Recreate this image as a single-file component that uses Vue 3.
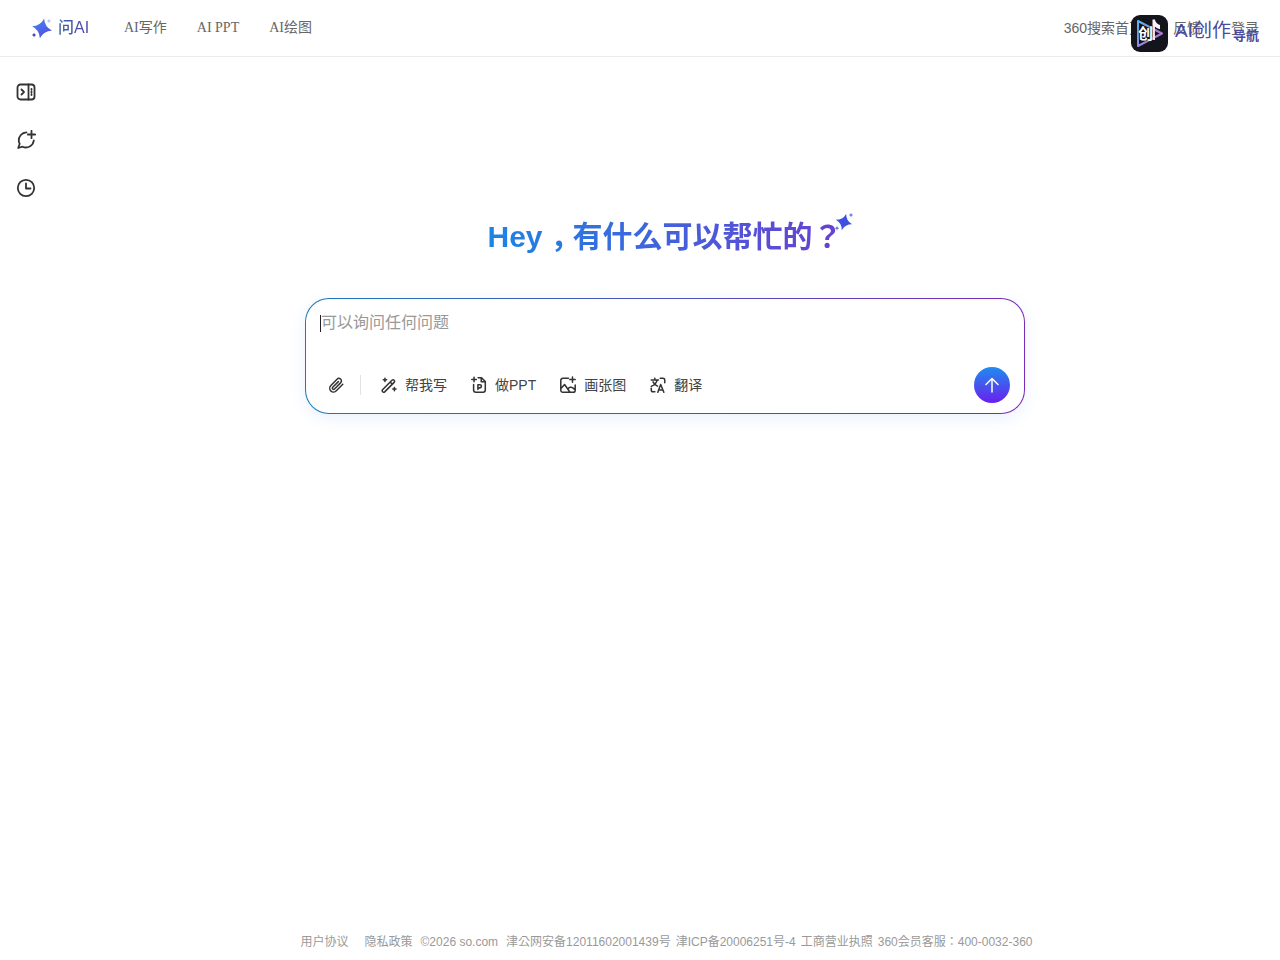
<script setup>
const navItems = ['AI写作', 'AI PPT', 'AI绘图']
const tools = [
  { key: 'write', label: '帮我写' },
  { key: 'ppt', label: '做PPT' },
  { key: 'image', label: '画张图' },
  { key: 'translate', label: '翻译' }
]
const footerLinks = ['©2026 so.com', '津公网安备12011602001439号', '津ICP备20006251号-4', '工商营业执照', '360会员客服：400-0032-360']
const star = 'M12 0Q14.500 9.500 24 12 14.500 14.500 12 24 9.500 14.500 0 12 9.500 9.500 12 0z'
</script>

<template>
  <div class="page">
    <header class="top">
      <div class="brand">
        <svg class="brand-star" viewBox="0 0 24 24">
          <defs>
            <linearGradient id="starFill" x1="0" y1="0" x2="1" y2="1">
              <stop offset="0" stop-color="#3f8ff0" />
              <stop offset="1" stop-color="#5a3fe0" />
            </linearGradient>
          </defs>
          <path :d="star" fill="url(#starFill)" transform="translate(13.100 12.500) rotate(12) scale(.92) translate(-12 -12)" />
          <path :d="star" fill="#a8cbf0" transform="translate(18.300 2) scale(.2)" />
          <path :d="star" fill="#3a3fa8" transform="translate(2 17.200) scale(.2)" />
        </svg>
        <span class="brand-name">问AI</span>
      </div>
      <nav class="nav">
        <a v-for="item in navItems" :key="item">{{ item }}</a>
      </nav>
      <div class="links">
        <a>360搜索首页</a>
        <a>反馈</a>
        <a>登录</a>
      </div>
      <div class="float-logo">
        <div class="float-icon">
          <svg viewBox="0 0 37 37">
            <defs>
              <linearGradient id="playEdge" x1="0" y1="0" x2="1" y2="1">
                <stop offset="0" stop-color="#4fb8ee" />
                <stop offset="1" stop-color="#d05fd0" />
              </linearGradient>
            </defs>
            <path d="M7 6 31 18.500 7 31z" fill="none" stroke="url(#playEdge)" stroke-width="2" stroke-linejoin="round" />
            <path d="M21.500 4.500h2.400c.6 3 2.400 4.500 5.100 5.600v4.200c-2-.5-3.700-1.400-5.100-2.800V25h-2.400z" fill="#fdf2f8" />
          </svg>
          <span class="float-mark">创</span>
        </div>
        <span class="float-title">AI创作</span>
        <span class="float-sub">导航</span>
      </div>
    </header>

    <div class="body">
      <aside class="side">
        <svg viewBox="0 0 20 20">
          <rect x="1.500" y="2.500" width="17" height="15" rx="3" />
          <path d="M12.500 2.500v15M5.500 7.500 8 10l-2.500 2.500M15.500 7v.8M15.500 9.600v.8M15.500 12.200v.8" />
        </svg>
        <svg viewBox="0 0 20 20">
          <path d="M10.500 2.300A8 8 0 0 0 2.800 11c.1 1.100.4 2 .9 2.800l-1.500 4.200 4.300-1.300a8 8 0 0 0 11.300-6.200" />
          <path d="M15.500 .8v7.400M11.800 4.500h7.400" />
        </svg>
        <svg viewBox="0 0 20 20">
          <circle cx="10" cy="10" r="8.200" />
          <path d="M10 5.500V10.500h4.500" />
        </svg>
      </aside>

      <main class="main">
        <div class="headline">
          <h1>Hey<span class="comma">，</span>有什么可以帮忙的？</h1>
          <svg class="headline-star" viewBox="0 0 24 24">
            <path :d="star" fill="#3f50e0" transform="translate(11.400 12.600) rotate(15) scale(.8) translate(-12 -12)" />
            <path :d="star" fill="#5a7fe0" transform="translate(17 2.200) scale(.2)" />
            <path :d="star" fill="#5a7fe0" transform="translate(1 17.200) scale(.2)" />
          </svg>
        </div>

        <section class="composer">
          <div class="input"><i class="caret"></i>可以询问任何问题</div>
          <div class="bar">
            <button class="attach">
              <svg viewBox="0 0 20 20">
                <path d="M16.800 9.200 10.300 15.800a3.700 3.700 0 0 1-5.600-5L11 4.300a2.500 2.500 0 0 1 3.800 3.300l-6.300 6.400a1.200 1.200 0 0 1-1.800-1.700l5.700-5.700" />
              </svg>
            </button>
            <span class="divider"></span>
            <button v-for="tool in tools" :key="tool.key" class="tool">
              <svg v-if="tool.key === 'write'" viewBox="0 0 20 20">
                <path d="M2.800 15.200 13.300 4.700a1.700 1.700 0 0 1 2.400 0 1.700 1.700 0 0 1 0 2.400L5.200 17.600a1.700 1.700 0 0 1-2.400-2.400zM11.300 6.700l2.400 2.400M5.500 2.500v3.500M3.700 4.200h3.600M16 12.800v3.500M14.200 14.500h3.600" />
              </svg>
              <svg v-else-if="tool.key === 'ppt'" viewBox="0 0 20 20">
                <path d="M9 2h3.800l4.200 4.200v9.300a2.500 2.500 0 0 1-2.500 2.500H6.500A2.500 2.500 0 0 1 4 15.500V9.500M12.500 2v4.500H17M8.800 15V9.800h2.200a1.700 1.700 0 0 1 0 3.400H8.800M4.500 1.500v5M2 4h5" />
              </svg>
              <svg v-else-if="tool.key === 'image'" viewBox="0 0 20 20">
                <path d="M10.500 2.500H4.300A2.300 2.300 0 0 0 2 4.800v11a2.300 2.300 0 0 0 2.300 2.300h11.400a2.300 2.300 0 0 0 2.300-2.300V10M2.200 14l4-4.500 6 8.500M10 14.500c1-2 3.500-2.500 5-1.500l3 2.500M15 1v6M12 4h6" />
              </svg>
              <svg v-else viewBox="0 0 20 20">
                <path d="M2.500 4.500h8M6.500 2.500v2M9 4.500c-.6 3-3 5.500-6.500 7M4.500 6.500c1 2.200 2.800 3.800 5 4.800M9.800 18l3.200-8.500 3.500 8.500M10.800 15.500h4.600M12.500 2.500h3a2 2 0 0 1 2 2v3M2.500 13.500v2a2 2 0 0 0 2 2h2" />
              </svg>
              <span>{{ tool.label }}</span>
            </button>
            <button class="send">
              <svg viewBox="0 0 20 20">
                <path d="M10 17V3.500M4 9.500l6-6 6 6" />
              </svg>
            </button>
          </div>
        </section>
      </main>
    </div>

    <footer class="foot">
      <a class="first">用户协议</a>
      <a class="second">隐私政策</a>
      <a v-for="text in footerLinks" :key="text">{{ text }}</a>
    </footer>
  </div>
</template>

<style scoped>
.page {
  height: 960px;
  display: flex;
  flex-direction: column;
  background: #fff;
  font-family: "Liberation Sans", "Noto Sans CJK KR", sans-serif;
}
.top {
  position: relative;
  height: 56px;
  flex: none;
  display: flex;
  align-items: center;
  padding-left: 30px;
  border-bottom: 1px solid #ebebeb;
}
.brand {
  display: flex;
  align-items: center;
  width: 94px;
}
.brand-star {
  width: 22px;
  height: 22px;
  margin-right: 6px;
}
.brand-name {
  font-size: 16px;
  line-height: 20px;
  font-weight: 500;
  background: linear-gradient(90deg, #3a66a8, #5240a8);
  -webkit-background-clip: text;
  background-clip: text;
  color: transparent;
}
.nav {
  display: flex;
  gap: 30px;
  font-family: "Liberation Serif", "Noto Sans CJK KR", serif;
  font-size: 14px;
  line-height: 20px;
  color: #666;
}
.links {
  margin-left: auto;
  display: flex;
  gap: 30px;
  padding-right: 21px;
  font-size: 14px;
  line-height: 20px;
  color: #666;
}
.float-logo {
  position: absolute;
  left: 1131px;
  top: 15px;
  width: 130px;
  height: 38px;
}
.float-icon {
  position: relative;
  width: 37px;
  height: 37px;
  border-radius: 9px;
  background: #14141c;
}
.float-icon svg {
  width: 37px;
  height: 37px;
  display: block;
}
.float-mark {
  position: absolute;
  left: 7px;
  top: 10px;
  font-size: 15px;
  line-height: 18px;
  font-weight: 700;
  color: #fff;
  text-shadow: 0 0 2px #14141c;
}
.float-title {
  position: absolute;
  left: 44px;
  top: 3px;
  font-size: 19px;
  line-height: 26px;
  color: #4a4a9c;
  white-space: nowrap;
}
.float-sub {
  position: absolute;
  left: 102px;
  top: 13px;
  font-size: 13px;
  line-height: 16px;
  font-weight: 700;
  color: #4a4a9c;
  white-space: nowrap;
}
.body {
  flex: 1;
  display: flex;
}
.side {
  width: 50px;
  flex: none;
  display: flex;
  flex-direction: column;
  align-items: flex-start;
  padding-left: 16px;
  box-sizing: border-box;
  gap: 28px;
  padding-top: 25px;
}
.side svg {
  width: 20px;
  height: 20px;
  fill: none;
  stroke: #333;
  stroke-width: 1.800;
  stroke-linecap: round;
  stroke-linejoin: round;
}
.main {
  flex: 1;
  display: flex;
  flex-direction: column;
  align-items: center;
  padding-top: 156px;
}
.headline {
  position: relative;
}
h1 {
  margin: 0;
  font-size: 30px;
  line-height: 48px;
  font-weight: 700;
  white-space: nowrap;
  background: linear-gradient(90deg, #1b85e6, #6a3fd0);
  -webkit-background-clip: text;
  background-clip: text;
  color: transparent;
}
.comma {
  margin: 0 -8px 0 8px;
}
.headline-star {
  position: absolute;
  right: -12px;
  top: -2px;
  width: 21px;
  height: 21px;
}
.composer {
  width: 720px;
  height: 116px;
  box-sizing: border-box;
  margin-top: 37px;
  padding: 14px 14px 10px 14px;
  border: 1px solid transparent;
  border-radius: 24px;
  background: linear-gradient(#fff, #fff) padding-box, linear-gradient(90deg, #1c78b8, #7a2ab8) border-box;
  box-shadow: 0 4px 16px rgba(70, 130, 230, .12);
  display: flex;
  flex-direction: column;
  justify-content: space-between;
}
.input {
  display: flex;
  align-items: center;
  font-size: 16px;
  line-height: 20px;
  color: #999;
}
.caret {
  width: 1px;
  height: 17px;
  background: #222;
}
.bar {
  display: flex;
  align-items: center;
  height: 36px;
}
button {
  border: 0;
  padding: 0;
  background: none;
  font: inherit;
  display: flex;
  align-items: center;
}
.attach {
  margin-left: 6px;
}
.bar svg {
  width: 20px;
  height: 20px;
  fill: none;
  stroke: #333;
  stroke-width: 1.500;
  stroke-linecap: round;
  stroke-linejoin: round;
}
.divider {
  width: 1px;
  height: 20px;
  margin: 0 18px 0 14px;
  background: #e2e2e2;
}
.tool {
  gap: 6px;
  margin-right: 22px;
  font-size: 14px;
  line-height: 20px;
  color: #444;
}
.bar .tool svg {
  width: 18px;
  height: 18px;
  margin: 0 1px;
  stroke-width: 1.700;
}
.send {
  width: 36px;
  height: 36px;
  margin-left: auto;
  border-radius: 50%;
  justify-content: center;
  background: linear-gradient(180deg, #1f8cf0, #6a1fee);
}
.bar .send svg {
  stroke: #fff;
  width: 20px;
  height: 20px;
}
.foot {
  height: 38px;
  flex: none;
  display: flex;
  justify-content: center;
  gap: 5px;
  padding: 13px 0 0 53px;
  font-size: 12px;
  line-height: 14px;
  color: #999;
  box-sizing: border-box;
}
.first {
  margin-right: 11px;
}
.second {
  margin-right: 3px;
}
.foot a:nth-child(3) {
  margin-right: 3px;
}
</style>

<style>
html, body {
  background: #fff;
}
</style>
